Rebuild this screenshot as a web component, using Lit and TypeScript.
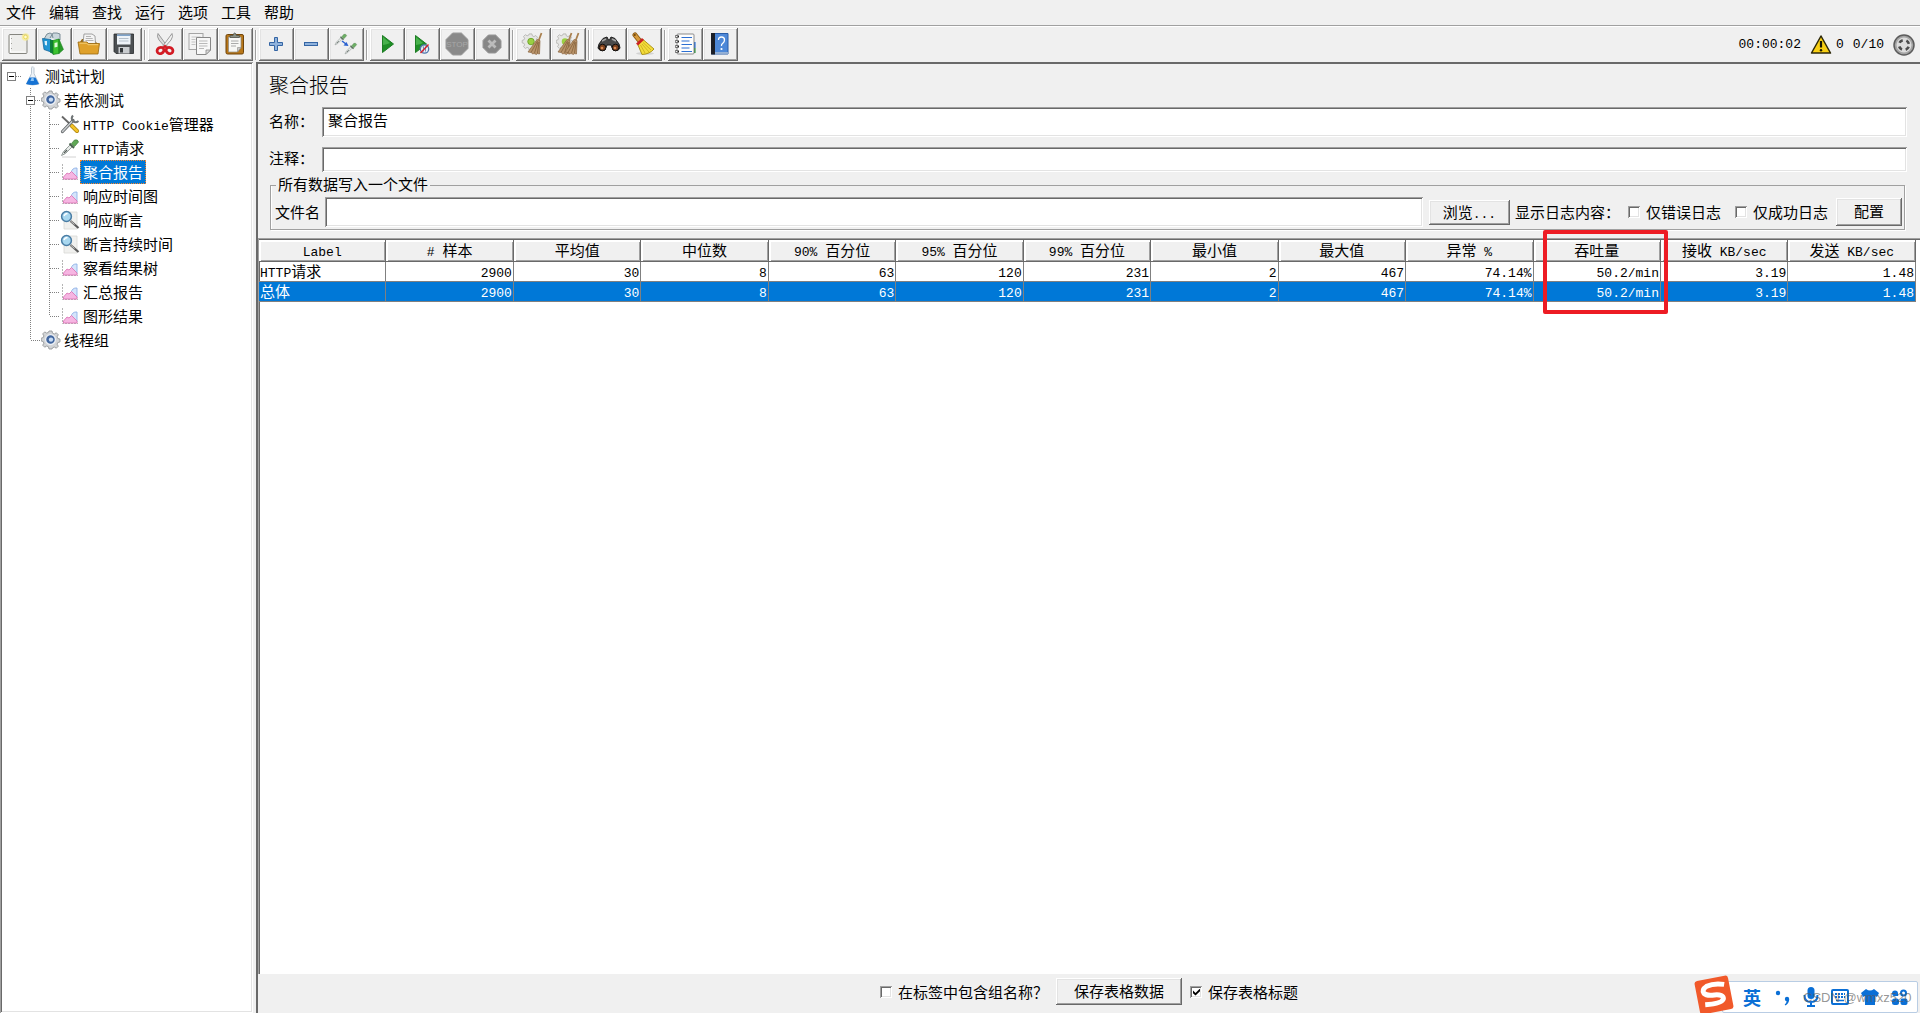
import { LitElement, html, css, svg, type TemplateResult } from "lit";
import { customElement } from "lit/decorators.js";
import { classMap } from "lit/directives/class-map.js";

// Latin runs are set in a monospaced face, smaller than the surrounding Chinese text.
const mix = (text: string) =>
  text
    .split(/([\x20-\x7e]+)/)
    .filter((s) => s)
    .map((s) => (/^[\x20-\x7e]/.test(s) ? html`<span class="latin">${s}</span>` : s));

const frame = (size: number, body: unknown) =>
  html`<svg width=${size} height=${size} viewBox="0 0 ${size} ${size}" aria-hidden="true">${body}</svg>`;

const gearPath =
  "M8 1h3l.5 2.2 1.8.8 2-1.2 2 2-1.2 2 .7 1.7 2.2.6v2.8l-2.2.6-.7 1.7 1.2 2-2 2-2-1.2-1.8.8L11 19H8l-.5-2.2-1.8-.8-2 1.2-2-2 1.2-2-.7-1.7L.2 11V8.200l2-.6.7-1.700-1.200-2 2-2 2 1.200 1.800-.8z";

const broom = (x: number) => svg`<g transform="translate(${x} 0)">
  <path d="M20.500 1 17.500 9" stroke="#a9804f" stroke-width="1.800"/>
  <path d="m16 7.500 3 1-.5 13.500-2.500-.5-.5 1-2.500-1-1.500.5-1-1.500-3.500-.5z" fill="#b9936a" stroke="#8a6540" stroke-width=".7"/>
  <path d="M16.500 9 10 20.500M17 10l-3.500 11M18 10l-1.500 11" stroke="#7d5a33" stroke-width=".7"/></g>`;

const stopSign = (a: number, b: number) => {
  const c = (b - a) * 0.3;
  return `M${a + c} ${a}H${b - c}L${b} ${a + c}V${b - c}L${b - c} ${b}H${a + c}L${a} ${b - c}V${a + c}Z`;
};

const pipette = svg`<path d="M1.500 17.500 3.500 13.500 10 7l2 2-6.500 6.500z" fill="#e6ebe8" stroke="#8b9491" stroke-width=".9"/>
  <path d="m4 15 3-3" stroke="#555d5a" stroke-width="1.300"/>
  <path d="m9.500 5.500 4.500 4.500" stroke="#46604a" stroke-width="1.800"/>
  <path d="M11.500 5.500 14.500 2q3.500-1 4 2L14.500 8.500z" fill="#5fa855" stroke="#3f7b3b" stroke-width=".7"/>`;

const icons: Record<string, TemplateResult> = {
  fresh: frame(24, svg`<rect x="2" y="2.500" width="18" height="19" rx="1" fill="#ededeb" stroke="#85857f"/><path d="M3.500 4v16h15" fill="none" stroke="#fff"/>
    <path d="M4.500 6v13" stroke="#a2a29e" stroke-dasharray="1 4"/>
    <circle cx="18.500" cy="5" r="3.800" fill="#f7ec94" opacity=".8"/><circle cx="18.500" cy="5" r="1.800" fill="#fffbd0" stroke="#e6cf3c" stroke-width=".7"/>`),
  templates: frame(24, svg`<path d="m2 7 3-5 3-1 2 1 1 4M8 6l3-5h4l3 1v6" fill="#c9d6dc" stroke="#71858e" stroke-width=".9"/>
    <path d="M.5 6.500 9 7.500V20L2 17.500z" fill="#2196d3" stroke="#0b5c92" stroke-width=".7"/><path d="M2.500 9H5v4.500l-2-.5z" fill="#d6effb"/>
    <path d="M8 8h3v14l-3-1.500z" fill="#0e7f3c"/><path d="m11 8.500 6-1.500v14.500L11 22.500z" fill="#3cc32f" stroke="#16801a" stroke-width=".7"/>
    <path d="m17 7 4.500 10.500-4.500 4z" fill="#2a9a29" stroke="#16801a" stroke-width=".5"/><path d="m12.500 11 3-.7v4.500l-3 .7z" fill="#dff9da"/>`),
  open: frame(24, svg`<path d="m3 10 2-3h3l1 2h9l3 3z" fill="#9a6a12"/><path d="M6 11 7 2h8l3 2 .5 8z" fill="#f4f4f4" stroke="#8d8d8d" stroke-width=".8"/>
    <path d="M9 4.500h5M8.700 6.500h7M8.500 8.500h8" stroke="#a5a5a5" stroke-width=".8"/>
    <path d="M1 10h9l1.500 1.500h11L21 22H3z" fill="#dfa12b" stroke="#996a10" stroke-width=".8"/><path d="M2.500 11.200h7l1.500 1.500h10" fill="none" stroke="#f5cf78"/>`),
  save: frame(24, svg`<path d="M2.500 2h19v19.500H4L2 19.500V2z" fill="#4b4f52" stroke="#26292b" stroke-width=".8"/>
    <rect x="5" y="2.500" width="13.500" height="10" fill="#eef3f8"/><path d="M5 3.200h13.500" stroke="#7aa0c8" stroke-width="1.500"/><path d="M7 6.500h9.500M7 9h9.500" stroke="#b5c0cb"/>
    <rect x="6.500" y="15" width="11" height="6.500" fill="#c9cccf"/><rect x="8" y="16" width="3" height="4.500" fill="#33373a"/>`),
  cut: frame(24, svg`<path d="M5 1.500q-1.500 3 1 6.500l7 8 1.500-1.500z" fill="#dcdcdc" stroke="#858585" stroke-width=".8"/><path d="M19 1.500q1.500 3-1 6.500l-7 8-1.500-1.500z" fill="#f2f2f2" stroke="#858585" stroke-width=".8"/>
    <ellipse cx="7.500" cy="18.500" rx="3.500" ry="3" transform="rotate(-25 7.500 18.500)" fill="none" stroke="#d31b24" stroke-width="2.800"/>
    <ellipse cx="16.500" cy="18.500" rx="3.500" ry="3" transform="rotate(25 16.500 18.500)" fill="none" stroke="#d31b24" stroke-width="2.800"/><path d="m10 16 2-2 2 2" fill="none" stroke="#d31b24" stroke-width="2"/>`),
  copy: frame(24, svg`<rect x="1" y="1.500" width="14" height="16" fill="#f4f4f4" stroke="#a5a5a5"/><path d="M3.500 5h9M3.500 7.500h4M3.500 10h4M3.500 12.500h4" stroke="#c4c4c4"/>
    <path d="M8.500 5.500h14V18L18 22.500H8.500z" fill="#f8f8f8" stroke="#888"/><path d="M11 9h8.500M11 11.500h8.500M11 14h8.500M11 16.500h5" stroke="#b9b9b9"/><path d="M22.500 18H18v4.500z" fill="#ddd" stroke="#888" stroke-width=".8"/>`),
  paste: frame(24, svg`<rect x="3" y="2.500" width="17.500" height="19.500" rx="1.500" fill="#b87719" stroke="#70450b"/><path d="M5.500 5H18v10.500L14.500 20h-9z" fill="#f7f7f5" stroke="#8d8a83" stroke-width=".7"/>
    <path d="M18 15.500h-3.500V20z" fill="#ccc" stroke="#8d8a83" stroke-width=".6"/><path d="M8 9h7.500M8 11.500h7.500M8 14h5" stroke="#aaa"/><path d="M7 5.500v-2h3q.5-2.500 1.700-2.500t1.700 2.500h3v2z" fill="#8a9084" stroke="#4d514b" stroke-width=".8"/>`),
  plus: frame(24, svg`<path d="M10.500 5.500h3v5h5v3h-5v5h-3v-5h-5v-3h5z" fill="#8fb2dc" stroke="#3465a4"/>`),
  minus: frame(24, svg`<rect x="5.500" y="10.500" width="13" height="3" fill="#8fb2dc" stroke="#3465a4"/>`),
  toggle: frame(24, svg`<g transform="translate(0 1) scale(.68)" opacity=".9">${pipette}</g><g transform="translate(10 10) scale(.68)" opacity=".9">${pipette}</g><path d="m8 9 4 3" stroke="#2b62d0" stroke-width="1.500"/><path d="m14.500 14-5-.5 3-3.500z" fill="#2b62d0"/>`),
  play: frame(24, svg`<path d="M7.500 3.500 18.500 12 7.500 20.500z" fill="#1e8e26" stroke="#1d7d24"/><path d="M8 5v8q4-.5 7-2z" fill="#63c864" opacity=".6"/>`),
  playNoPause: frame(24, svg`<path d="M5.500 3.500 16.500 12 5.500 20.500z" fill="#1e8e26" stroke="#1d7d24"/><path d="M6 5v8q4-.5 7-2z" fill="#63c864" opacity=".6"/><circle cx="14.500" cy="17" r="4.200" fill="#e7edf5" fill-opacity=".85" stroke="#4d75ac" stroke-width="1.300"/><path d="M13.500 14.500v5M15.500 14.500v5" stroke="#6b8dbd"/><path d="m10.500 21 8-8.500" stroke="#d6202a" stroke-width="1.400"/>`),
  stop: frame(24, svg`<path d=${stopSign(1, 23)} fill="#8a8a8a" stroke="#9b9b9b"/><text x="12" y="15" text-anchor="middle" font-family="Liberation Sans Narrow, Liberation Sans, sans-serif" font-size="8" fill="#a8a8a8">STOP</text>`),
  shutdown: frame(24, svg`<path d=${stopSign(3, 21)} fill="#868686" stroke="#979797"/><path d="m8.500 8.500 7 7m0-7-7 7" stroke="#bcbcbc" stroke-width="2.800"/>`),
  clear: frame(24, svg`<g transform="translate(1 1) scale(.9)"><path d=${gearPath} fill="#e6e6e4" stroke="#b0b0ac" stroke-width=".9"/><circle cx="10" cy="9.500" r="3.600" fill="#9bd043" stroke="#6ba328"/></g>${broom(0)}`),
  clearAll: frame(24, svg`<g transform="translate(0 1) scale(.9)"><path d=${gearPath} fill="#e6e6e4" stroke="#b0b0ac" stroke-width=".9"/><circle cx="10" cy="9.500" r="3.600" fill="#9bd043"/></g>${broom(-5)}${broom(2)}`),
  find: frame(24, svg`<path d="M2 12 6 6.500l4-1.500 1.500 3h1L14 5l4 1.500 4 5.500 1 4q-2 4-7 2l-2-5h-4l-2 5q-5 2-7-2z" fill="#4a4a4a" stroke="#1d1d1d"/><path d="m5 9 4-2M15 7l4 2" stroke="#a5a5a5" stroke-width="1.500"/>
    <circle cx="5.500" cy="15.500" r="3.300" fill="#7a3f1c" stroke="#111"/><circle cx="18.500" cy="15.500" r="3.300" fill="#7a3f1c" stroke="#111"/><circle cx="5" cy="16" r="1.300" fill="#d88a55"/><circle cx="18" cy="16" r="1.300" fill="#d88a55"/>`),
  resetFind: frame(24, svg`<ellipse cx="13" cy="21.500" rx="9" ry="1.500" fill="#d3d3d3"/><path d="m3 3 4 5" stroke="#8a5a14" stroke-width="5" stroke-linecap="round"/><path d="m3 3 4 5" stroke="#d79a3a" stroke-width="3.200" stroke-linecap="round"/><circle cx="2.800" cy="3" r="1" fill="#6b440e"/>
    <path d="m11 7.500 11 9.500q-4 5-12 5.500L6 13z" fill="#f3dc3b" stroke="#a68c0c" stroke-width=".9"/><path d="m8.500 13 4.500 8M10 12l7 8M11 10.500l8 7.500" stroke="#c7a91c" stroke-width=".8"/><path d="m5 12.500 6-5.500" stroke="#cc2222" stroke-width="2.800"/>`),
  log: frame(24, svg`<path d="M19 10h3.500v6H19z" fill="#0e60d8"/><path d="M19 16h3.500v5H19z" fill="#1a8c28"/><rect x="4" y="2" width="17" height="20" rx="1" fill="#fdfdfd" stroke="#8b8b8b"/>
    <path d="M8.500 5.500H19M8.500 9h8M8.500 12.500H19M8.500 16h8M8.500 19.500H19" stroke="#2c6fd2" stroke-width="1.200"/><path d="M2 4.500h4M2 9.500h4M2 14.500h4M2 19.500h4" stroke="#222" stroke-width="2"/><path d="M2.500 4.500h2M2.500 9.500h2M2.500 14.500h2M2.500 19.500h2" stroke="#eee"/>`),
  help: frame(24, svg`<path d="M3.500 1.500H20V22H3.500z" fill="#4d88d8" stroke="#285ca8"/><path d="M3 1h4v21.500H3z" fill="#1b1f28"/><path d="M7 21h13" stroke="#aebfd6" stroke-width="1.500"/>
    <path d="M10.500 8q0-3 3-3t3 3q0 2-1.700 3.200T13.500 14" fill="none" stroke="#fff" stroke-width="1.300"/><circle cx="13.500" cy="17" r="1.100" fill="#fff"/>`),
  flask: frame(20, svg`<path d="M9.500 1h2M9.500 1.500v6l-5 10.500q6 2 12.500 0L12 7.500v-6" fill="#edf3f8" stroke="#b5c2cd" stroke-width=".9"/><path d="M7.500 11.500h6l3.500 6.500q-6 2-13 0z" fill="#1673d4"/><path d="M9.500 12h2l.5 3H8.500z" fill="#8cc4f5"/>`),
  gear: frame(20, svg`<path d=${gearPath} fill="#d2d4d6" stroke="#94979a" stroke-width=".9"/><circle cx="9.500" cy="9.600" r="4.900" fill="#41669f" stroke="#eef1f5" stroke-width="1.300"/><circle cx="10" cy="9.600" r="2.200" fill="#c8dcf3"/>`),
  tools: frame(20, svg`<path d="M2 2.500 11 11" stroke="#666" stroke-width="1.800"/><path d="m11.500 11.500 5.500 5.500" stroke="#a87f0a" stroke-width="4" stroke-linecap="round"/><path d="m11.500 11.500 5.500 5.500" stroke="#f3c328" stroke-width="2.600" stroke-linecap="round"/>
    <path d="M2.500 17.500 13 6.500" stroke="#5e6264" stroke-width="3.200" stroke-linecap="round"/><path d="M2.500 17.500 13 6.500" stroke="#c9ccce" stroke-width="1.600" stroke-linecap="round"/><path d="M13 1.500q-2.500 3 0 5.500t5.500 0" fill="none" stroke="#6f7476" stroke-width="2"/>`),
  sampler: frame(20, svg`${pipette}<path d="M2 19h14" stroke="#d2d2d2"/>`),
  chart: frame(20, svg`<path d="M2.500 2v15.500H18" fill="none" stroke="#b5b5b5" stroke-dasharray="2 1"/><path d="M11 11q1-5.500 6-5v10l-5-3z" fill="#d5e4fb" stroke="#8fb1e6" stroke-width=".9"/><path d="m3.500 15 3.500-4 2 1 2.500-2.500 5.500 5.500v2H3.500z" fill="#f6b6e2" stroke="#dc78b8" stroke-width=".9"/>`),
  lens: frame(20, svg`<path d="M4 2h13v17H4z" fill="#f0f0ee" stroke="#d8d8d4" stroke-width=".8"/><path d="m10.500 11 8 7" stroke="#5a5a5a" stroke-width="2.200"/><path d="m10.500 11 4 3.500" stroke="#ccc" stroke-width="1"/><circle cx="6.500" cy="6.500" r="4.900" fill="#a8d7ef" stroke="#4a7da5" stroke-width="1.500"/><path d="M4 6q1-2.500 3.500-2.500" fill="none" stroke="#fff" stroke-width="1.300"/>`),
  warning: frame(22, svg`<path d="M11 2 20.500 19h-19z" fill="#f8cf14" stroke="#2c2708" stroke-width="1.500" stroke-linejoin="round"/><path d="M11 7v6.500" stroke="#1a1803" stroke-width="2.200"/><circle cx="11" cy="16.200" r="1.200" fill="#1a1803"/>`),
  remote: frame(22, svg`<circle cx="11" cy="11" r="10" fill="#a5a5a5" stroke="#5c5c5c" stroke-width="1.500"/><circle cx="11" cy="11" r="7.500" fill="#dcdcdc"/><circle cx="11" cy="11" r="5" fill="none" stroke="#4c4c4c" stroke-width="2.600" stroke-dasharray="4 3.850" stroke-dashoffset="-1.900"/>`),
};

const toolbar: [string, string, boolean?][][] = [
  [["fresh", "新建"], ["templates", "模板"], ["open", "打开"], ["save", "保存"]],
  [["cut", "剪切"], ["copy", "复制"], ["paste", "粘贴"]],
  [["plus", "全部展开"], ["minus", "全部折叠"], ["toggle", "切换"]],
  [["play", "启动"], ["playNoPause", "不停顿开始"], ["stop", "停止", true], ["shutdown", "关闭", true]],
  [["clear", "清除"], ["clearAll", "清除全部"]],
  [["find", "查找"], ["resetFind", "重置搜索"]],
  [["log", "函数助手"], ["help", "帮助"]],
];

const leaves: [string, string][] = [
  ["tools", "HTTP Cookie管理器"],
  ["sampler", "HTTP请求"],
  ["chart", "聚合报告"],
  ["chart", "响应时间图"],
  ["lens", "响应断言"],
  ["lens", "断言持续时间"],
  ["chart", "察看结果树"],
  ["chart", "汇总报告"],
  ["chart", "图形结果"],
];

const columns = ["Label", "# 样本", "平均值", "中位数", "90% 百分位", "95% 百分位", "99% 百分位", "最小值", "最大值", "异常 %", "吞吐量", "接收 KB/sec", "发送 KB/sec"];
const figures = ["2900", "30", "8", "63", "120", "231", "2", "467", "74.14%", "50.2/min", "3.19", "1.48"];

const shared = css`
  * { box-sizing: border-box; }
  svg { display: block; flex: none; }
  .latin { font-family: "Liberation Mono", monospace; font-size: 13px; line-height: 0; white-space: pre; }
  button {
    font: inherit; color: inherit; margin: 0; padding: 0; border: 0; background: #f0f0f0;
    box-shadow: inset -1px -1px #696969, inset 1px 1px #fff, inset -2px -2px #a0a0a0, inset 2px 2px #e3e3e3;
  }
`;

@customElement("app-menu")
class AppMenu extends LitElement {
  static styles = [shared, css`
    :host { display: block; background: #f0f0f0; }
    .menu { display: flex; gap: 13px; height: 26px; padding: 0 6px; border-bottom: 1px solid #a0a0a0; }
    .menu button { box-shadow: none; padding-bottom: 2px; }
    .bar { display: flex; align-items: center; height: 36px; padding: 0 5px 0 2px; border-top: 1px solid #fff; }
    .group { display: flex; align-items: center; }
    .group + .group::before { content: ""; width: 1px; height: 30px; margin: 0 2px; background: #a0a0a0; border-right: 1px solid #fff; }
    .tool { display: flex; align-items: center; justify-content: center; width: 35px; height: 33px; padding: 0 2px 1px 0; }
    .status { display: flex; align-items: center; margin-left: auto; gap: 4px; }
    .status .latin { padding-right: 5px; }
  `];
  render() {
    return html`
      <nav class="menu">${["文件", "编辑", "查找", "运行", "选项", "工具", "帮助"].map((m) => html`<button>${m}</button>`)}</nav>
      <div class="bar">
        ${toolbar.map((g) => html`<div class="group">${g.map(([icon, label, off]) => html`<button class="tool" aria-label=${label} ?disabled=${!!off}>${icons[icon]}</button>`)}</div>`)}
        <div class="status"><span class="latin">00:00:02</span>${icons.warning}<span class="latin">0</span><span class="latin">0/10</span>${icons.remote}</div>
      </div>`;
  }
}

@customElement("plan-tree")
class PlanTree extends LitElement {
  static styles = [shared, css`
    :host { display: block; overflow: hidden; padding: 2px 3px; background: #fff;
      box-shadow: inset 1px 1px #a0a0a0, inset -1px -1px #fff, inset 2px 2px #696969, inset -2px -2px #e3e3e3; }
    ul { list-style: none; margin: 0; padding: 0; }
    .first, .second { background: repeating-linear-gradient(#808080 0 1px, transparent 1px 2px) no-repeat; }
    .first { background-size: 1px calc(100% - 12px); background-position: 27px 0; }
    .second { background-size: 1px calc(100% - 12px); background-position: 46px 0; }
    .row { display: flex; align-items: center; height: 24px; white-space: nowrap; }
    .root { padding-left: 4px; }
    .branch { padding-left: 23px; }
    .single { padding-left: 28px; }
    .leaf { padding-left: 47px; }
    .toggle { width: 9px; height: 9px; border: 1px solid #808080; background: #fff; box-shadow: none; flex: none; }
    .toggle::before { content: ""; display: block; width: 5px; height: 1px; margin: 0 auto; background: #000; }
    .stub { width: 6px; height: 1px; background: repeating-linear-gradient(90deg, #808080 0 1px, transparent 1px 2px); }
    .long { width: 10px; }
    .text { height: 24px; line-height: 21px; padding: 0 2px; border: 1px solid transparent; }
    .on { color: #fff; background: #0078d7; border: 1px dotted #ff8728; }
  `];
  render() {
    return html`
      <ul>
        <li>
          <div class="row root"><button class="toggle" aria-label="折叠"></button><span class="stub"></span>${icons.flask}<span class="text">测试计划</span></div>
          <ul class="first">
            <li>
              <div class="row branch"><button class="toggle" aria-label="折叠"></button><span class="stub"></span>${icons.gear}<span class="text">若依测试</span></div>
              <ul class="second">
                ${leaves.map(([icon, name], i) => html`<li class="row leaf"><span class="stub long"></span>${icons[icon]}<span class=${classMap({ text: true, on: i === 2 })}>${mix(name)}</span></li>`)}
              </ul>
            </li>
            <li class="row single"><span class="stub long"></span>${icons.gear}<span class="text">线程组</span></li>
          </ul>
        </li>
      </ul>`;
  }
}

@customElement("report-panel")
class ReportPanel extends LitElement {
  static styles = [shared, css`
    :host { display: flex; flex-direction: column; min-width: 0; background: #f0f0f0; border: 2px solid #696969; border-width: 2px 0 0 2px; }
    .head { padding: 6px 13px 8px 11px; }
    h1 { margin: 0 0 7px; font-size: 20px; line-height: 30px; font-weight: 300; }
    .line { display: flex; align-items: center; margin-bottom: 10px; }
    .line label { width: 53px; line-height: 20px; padding-bottom: 3px; }
    input { font: inherit; color: inherit; margin: 0; }
    .box { flex: 1; min-width: 0; height: 30px; padding: 0 6px 5px; border: 0; background: #fff;
      box-shadow: inset 1px 1px #a0a0a0, inset -1px -1px #fff, inset 2px 2px #696969, inset -2px -2px #e3e3e3; }
    .short { height: 25px; }
    .line.last { margin-bottom: 1px; }
    fieldset { min-width: 0; margin: 0 2px 0 1px; padding: 0 2px 2px 4px; border: 1px solid #a0a0a0; box-shadow: 1px 1px #fff, inset 1px 0 #fff; }
    legend { margin: 0 1px; padding: 0 2px; line-height: 22px; height: 24px; }
    .file { display: flex; align-items: center; height: 30px; white-space: nowrap; }
    .file .box { margin: 0 6px 0 5px; }
    .file label, .caption { padding-bottom: 1px; }
    .browse { width: 81px; height: 25px; margin-right: 5px; }
    .config { width: 66px; height: 28px; margin-left: 8px; padding-bottom: 2px; }
    .check { display: flex; align-items: center; gap: 6px; }
    .file .check { margin-left: 14px; }
    .file .caption + .check { margin-left: 8px; }
    .tick { appearance: none; width: 12px; height: 12px; background: #fff; flex: none;
      box-shadow: inset 1px 1px #a0a0a0, inset -1px -1px #fff, inset 2px 2px #696969, inset -2px -2px #e3e3e3; }
    .tick:checked::before { content: ""; display: block; width: 7px; height: 7px; margin: 3px; background: #000;
      clip-path: polygon(0 28%, 36% 64%, 100% 0, 100% 40%, 36% 100%, 0 68%); }
    .scroll { flex: 1; min-height: 0; padding-right: 4px; background: #fff; border: 1px solid #a0a0a0; border-right: 0; border-bottom: 0; box-shadow: inset 1px 1px #696969; }
    table { width: 100%; table-layout: fixed; border-collapse: separate; border-spacing: 0; }
    th { position: relative; height: 23px; padding: 0 0 1px; font-weight: 400; line-height: 20px; background: #f0f0f0; white-space: nowrap;
      border: 1px solid #696969; border-left: 0; box-shadow: inset 2px 2px #fff, inset -1px -1px #a0a0a0; }
    td { height: 20px; padding: 0 1px 1px; line-height: 18px; text-align: right; white-space: nowrap; border: 1px solid #808080; border-width: 0 1px 1px 0; }
    td:first-child { text-align: left; }
    .picked td { color: #fff; background: #0078d7; }
    .marked::after { content: ""; position: absolute; z-index: 1; top: -10px; left: 9px; right: -8px; height: 76px; border: 4px solid #ed1c24; border-radius: 2px; }
    .foot { display: flex; align-items: center; justify-content: center; gap: 8px; height: 39px; padding-bottom: 4px; }
    .save { width: 126px; height: 27px; padding-bottom: 2px; }
  `];
  private record(name: string, picked: boolean) {
    return html`<tr class=${classMap({ picked })}><td>${mix(name)}</td>${figures.map((f) => html`<td>${mix(f)}</td>`)}</tr>`;
  }
  render() {
    return html`
      <div class="head">
        <h1>聚合报告</h1>
        <div class="line"><label for="name">名称：</label><input id="name" class="box" .value=${"聚合报告"} /></div>
        <div class="line last"><label for="note">注释：</label><input id="note" class="box short" /></div>
        <fieldset>
          <legend>所有数据写入一个文件</legend>
          <div class="file">
            <label for="file">文件名</label><input id="file" class="box" />
            <button class="browse">${mix("浏览...")}</button>
            <span class="caption">显示日志内容：</span>
            <label class="check"><input type="checkbox" class="tick" />仅错误日志</label>
            <label class="check"><input type="checkbox" class="tick" />仅成功日志</label>
            <button class="config">配置</button>
          </div>
        </fieldset>
      </div>
      <div class="scroll">
        <table>
          <thead><tr>${columns.map((c) => html`<th class=${classMap({ marked: c === "吞吐量" })}>${mix(c)}</th>`)}</tr></thead>
          <tbody>${this.record("HTTP请求", false)}${this.record("总体", true)}</tbody>
        </table>
      </div>
      <div class="foot">
        <label class="check"><input type="checkbox" class="tick" />在标签中包含组名称？</label>
        <button class="save">保存表格数据</button>
        <label class="check"><input type="checkbox" class="tick" checked />保存表格标题</label>
      </div>`;
  }
}

@customElement("input-bar")
class InputBar extends LitElement {
  static styles = css`
    :host { display: flex; align-items: flex-end; height: 38px; }
    svg { display: block; flex: none; }
    .logo { position: relative; z-index: 1; margin-right: -12px; }
    .strip { box-sizing: border-box; position: relative; display: flex; align-items: center; gap: 12px; width: 196px; height: 32px; padding: 0 7px 0 20px; background: #fff; border: 1px solid #b9cde4; border-radius: 2px; color: #0a6fd6; }
    .lang { font-size: 18px; font-weight: 700; line-height: 30px; }
    .credit { position: absolute; left: 80px; top: 6px; font: 13px/20px "Liberation Sans", sans-serif; color: rgba(90, 90, 90, 0.65); white-space: nowrap; }
  `;
  render() {
    return html`
      <svg class="logo" width="40" height="38" viewBox="0 0 40 38" aria-hidden="true"><g transform="rotate(-11 20 20)"><rect x="3" y="3" width="34" height="34" rx="3" fill="#f1592a"/><path d="M32 11.500Q22 8 14.500 10q-6 2.500-4 6.500 2 3 10 3.500 9 1 8 5.500-2 4.500-19 2.500" fill="none" stroke="#fff" stroke-width="5"/></g></svg>
      <div class="strip">
        <span class="lang">英</span>
        <svg width="18" height="20" viewBox="0 0 18 20"><circle cx="5" cy="6" r="2.200" fill="currentColor"/><circle cx="14" cy="12" r="2.200" fill="currentColor"/><path d="M16.200 12q0 4-3.700 6.500l-.8-1q2-1.500 2-4z" fill="currentColor"/></svg>
        <svg width="16" height="20" viewBox="0 0 16 20"><rect x="4.500" y="0" width="7" height="12" rx="3.500" fill="currentColor"/><path d="M1.500 8q0 7 6.500 7t6.500-7M8 15v3M4 19h8" fill="none" stroke="currentColor" stroke-width="2"/></svg>
        <svg width="18" height="16" viewBox="0 0 18 16"><rect x="1" y="1" width="16" height="14" rx="1" fill="none" stroke="currentColor" stroke-width="2"/><path d="M4 5h10M4 8h10" stroke="currentColor" stroke-width="2" stroke-dasharray="2 1"/><path d="M5 11.500h8" stroke="currentColor" stroke-width="1.500"/></svg>
        <svg width="18" height="18" viewBox="0 0 18 18"><path d="M5 1q4 3 8 0l5 4-2 4-2-1v9H4V8L2 9 0 5z" fill="currentColor"/></svg>
        <svg width="17" height="17" viewBox="0 0 17 17"><path d="M1 4.500a3 3 0 0 1 6 0V7H4a2.500 2.500 0 0 1-3-2.500z" fill="currentColor"/><rect x="10" y="1.500" width="5" height="5" rx="2.500" fill="none" stroke="currentColor" stroke-width="2"/><rect x="1" y="9.500" width="7" height="6.500" rx="2.500" fill="currentColor"/><rect x="9.500" y="9.500" width="7" height="6.500" rx="2" fill="currentColor"/></svg>
        <span class="credit">CSDN @wmxz520</span>
      </div>`;
  }
}

@customElement("app-root")
class AppRoot extends LitElement {
  static styles = css`
    :host { display: flex; flex-direction: column; height: 100vh; position: relative; overflow: hidden; background: #f0f0f0; color: #000;
      font: 15px/20px "Noto Sans CJK SC", sans-serif; }
    .body { display: grid; grid-template-columns: 253px minmax(0, 1fr); gap: 3px; flex: 1; min-height: 0; }
    input-bar { position: absolute; right: 2px; bottom: 0; }
  `;
  render() {
    return html`
      <app-menu></app-menu>
      <main class="body"><plan-tree></plan-tree><report-panel></report-panel></main>
      <input-bar></input-bar>`;
  }
}
